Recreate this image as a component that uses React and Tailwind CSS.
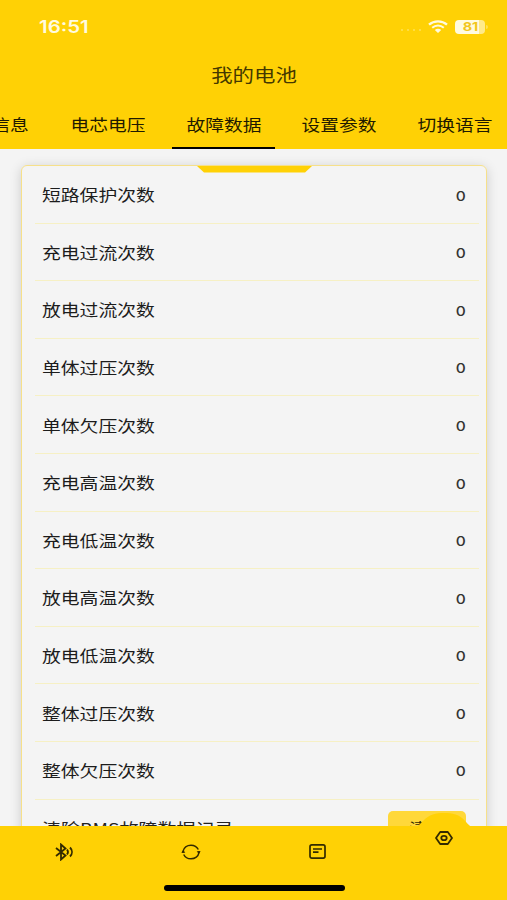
import React from 'react';

const faults = [
  { label: '短路保护次数', value: 0 },
  { label: '充电过流次数', value: 0 },
  { label: '放电过流次数', value: 0 },
  { label: '单体过压次数', value: 0 },
  { label: '单体欠压次数', value: 0 },
  { label: '充电高温次数', value: 0 },
  { label: '充电低温次数', value: 0 },
  { label: '放电高温次数', value: 0 },
  { label: '放电低温次数', value: 0 },
  { label: '整体过压次数', value: 0 },
  { label: '整体欠压次数', value: 0 },
];

const tabs = ['电芯电压', '故障数据', '设置参数', '切换语言'];

const StatusBar = () => (
  <div className="flex h-[53px] items-center justify-between pl-[39px] pr-[19px] text-[#fffbe0]">
    <span className="inline-block origin-left scale-x-[1.2] pt-px font-['Inter',sans-serif] text-[17px] font-semibold leading-none">16:51</span>
    <div className="flex items-center">
      <div className="mr-[7px] mt-[7px] flex gap-[4px]">
        {[0, 1, 2, 3].map((i) => (
          <span key={i} className="h-[2px] w-[2px] rounded-full bg-[#ffe154]" />
        ))}
      </div>
      <svg className="mr-[7px] h-[13px] w-[20px]" viewBox="0 0 20 13" fill="none" stroke="currentColor">
        <path d="M1 4.6C6 .2 14 .2 19 4.6" strokeWidth="2.3" />
        <path d="M4.2 7.8c3.4-3 8.2-3 11.6 0" strokeWidth="2.1" />
        <path d="M6.8 9.9c1.9-1.6 4.5-1.6 6.4 0L10 12.9z" fill="currentColor" stroke="none" />
      </svg>
      <div className="flex h-[14px] w-[30px] items-center justify-center rounded-[4px] bg-linear-to-r from-[#fffbe0] from-80% to-[#ffea8a] to-80%">
        <span className="inline-block scale-x-[1.2] font-['Inter',sans-serif] text-[12px] font-bold leading-none text-[#f2c61c]">81</span>
      </div>
      <span className="ml-px h-[4px] w-[2px] rounded-r-full bg-[#ffe154]" />
    </div>
  </div>
);

const FaultRow = ({ label, value }) => (
  <div className="ml-[13px] mr-[7px] flex h-[57.6px] shrink-0 items-center justify-between border-b border-[#f6f0c4] pl-[7px] pr-[13px]">
    <span className="inline-block origin-left scale-x-[1.175] text-[16px] leading-none text-[#1c1c1c]">{label}</span>
    <span className="inline-block origin-right scale-x-[1.15] pt-[4px] font-['Inter',sans-serif] text-[13.5px] font-medium leading-none text-[#333]">{value}</span>
  </div>
);

const BottomNav = () => (
  <nav className="relative h-[74.5px] shrink-0 bg-[#ffd105] text-[#332a00]">
    {/* raised bump behind the active item */}
    <svg className="absolute -top-[14px] left-[410px] h-[16px] w-[68px] text-[#ffd105]" viewBox="0 0 68 16" fill="currentColor">
      <path d="M3 16c5-1 7-4 10-7C19 2.5 26 1 34 1s16 1.5 21 8c3 3 5 6 10 7z" />
    </svg>
    <div className="flex h-[52px] items-center">
      <div className="flex w-[127px] justify-center">
        <svg className="h-[18px] w-[20px]" viewBox="0 0 20 18" fill="none" stroke="currentColor" strokeWidth="1.8">
          <path d="M2 5l9.5 7.5L7 16.5V1.5l4.5 4L2 13" />
          <path d="M13 6.5c1.2 1.5 1.2 3.500 0 5M16 4.5c2.6 2.6 2.6 6.400 0 9" />
        </svg>
      </div>
      <div className="flex w-[127px] justify-center">
        <svg className="h-[16px] w-[20px]" viewBox="0 0 20 16" fill="none" stroke="currentColor" strokeWidth="1.5">
          <path d="M2 9V7.5C2.7 3.8 6 1.2 10 1.2c3.3 0 6 1.7 7.3 4.3M18 7v1.5c-.7 3.7-4 6.3-8 6.3-3.3 0-6-1.7-7.3-4.3" />
          <path d="M.3 8.800L2.3 6l2 2.800zM15.7 7.2L17.7 10l2-2.800z" fill="currentColor" stroke="none" />
        </svg>
      </div>
      <div className="flex w-[127px] justify-center">
        <svg className="h-[15px] w-[17px]" viewBox="0 0 17 15" fill="none" stroke="currentColor" strokeWidth="1.7">
          <rect x="1" y=".9" width="15" height="13.2" rx="1.8" />
          <path d="M4 5h9M4 8.2h5.5" />
        </svg>
      </div>
      <div className="flex w-[126px] justify-center pb-[27px]">
        <svg className="h-[14px] w-[18px]" viewBox="0 0 18 14" fill="none" stroke="currentColor" strokeWidth="1.8">
          <path d="M5.2 1h7.6L17 7l-4.2 6H5.2L1 7z" strokeLinejoin="round" />
          <ellipse cx="9" cy="7" rx="2.7" ry="2.2" />
        </svg>
      </div>
    </div>
    <div className="ml-[164px] mt-[7.5px] h-[6px] w-[181px] rounded-full bg-black" />
  </nav>
);

export default function App() {
  return (
    <div className="flex h-[900px] w-[507px] flex-col overflow-hidden bg-[#f4f4f4] font-['Noto_Sans_CJK_SC',sans-serif]">
      <header className="h-[149px] shrink-0 overflow-hidden bg-[#ffd105]">
        <StatusBar />
        <div className="flex h-[44px] items-center justify-center pb-[2px]">
          <h1 className="inline-block scale-x-[1.19] text-[18px] leading-none text-[#443800]">我的电池</h1>
        </div>
        <div className="-ml-[30px] flex h-[52px] w-[544px] text-[16px] leading-none text-[#1f1a00]">
          <div className="flex h-[50px] w-[80px] shrink-0 items-center justify-center pt-[4px]">
            <span className="inline-block scale-x-[1.17]">信息</span>
          </div>
          {tabs.map((tab) => (
            <div key={tab} className="flex w-[115.8px] shrink-0 flex-col items-center">
              <div className="flex h-[49.5px] items-center pt-[4px]">
                <span className="inline-block scale-x-[1.17]">{tab}</span>
              </div>
              {tab === '故障数据' && <div className="h-[2.5px] w-[103px] bg-black" />}
            </div>
          ))}
        </div>
      </header>

      <main className="min-h-0 flex-1 overflow-hidden pl-[21px] pr-[20px] pt-[16px]">
        <div className="relative flex h-[760px] flex-col rounded-[6px] border border-[#f6e08a] shadow-[0_2px_12px_rgba(0,0,0,0.17)]">
          <div className="absolute left-[175px] top-0 h-[6.5px] w-[115px] bg-[#ffd105] [clip-path:polygon(0_0,100%_0,calc(100%-7px)_100%,7px_100%)]" />
          {faults.map((fault) => (
            <FaultRow key={fault.label} {...fault} />
          ))}
          <div className="flex h-[56px] shrink-0 items-center justify-between pl-[20px] pr-[20px]">
            <span className="inline-block origin-left scale-x-[1.19] text-[16px] leading-none text-[#222]">清除BMS故障数据记录</span>
            <div className="flex h-[34px] w-[78px] items-center justify-center rounded-[5px] bg-[#ffd83a] text-[#332a00]">
              <span className="inline-block scale-x-[1.18] text-[15px] leading-none">清除</span>
            </div>
          </div>
        </div>
      </main>

      <BottomNav />
    </div>
  );
}
